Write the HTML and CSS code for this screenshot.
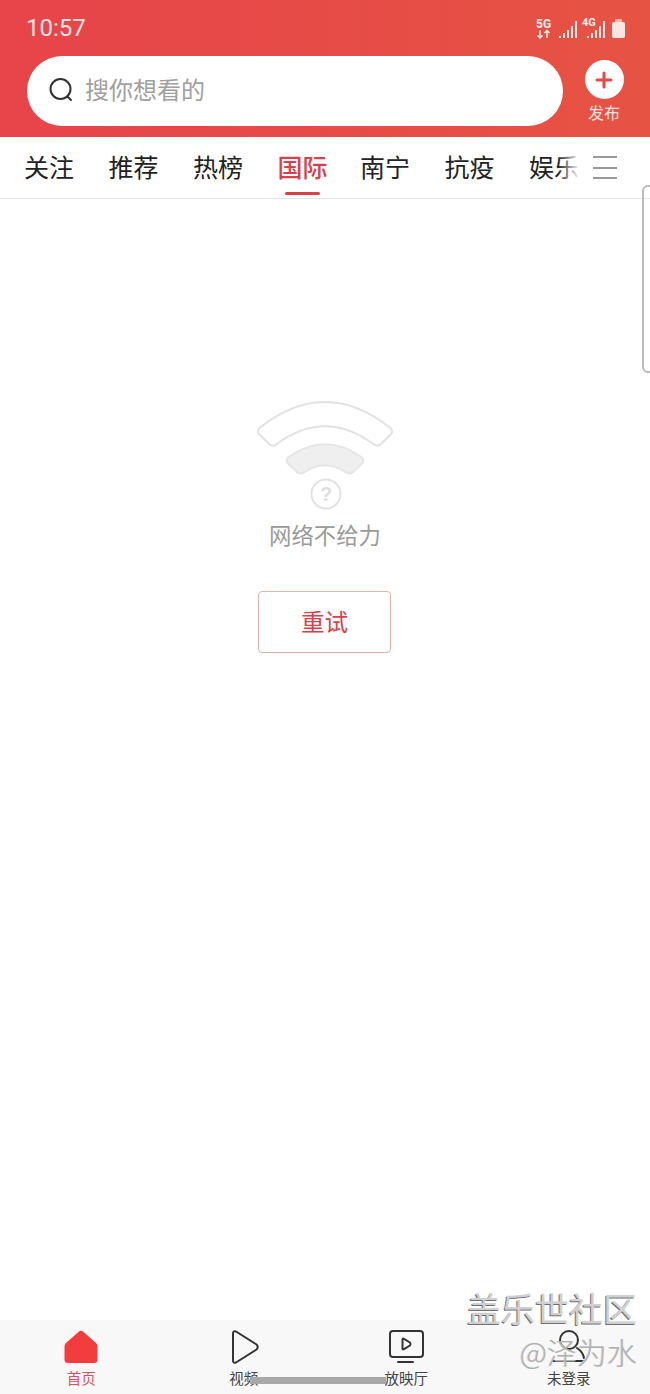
FILE: index.html
```html
<!DOCTYPE html>
<html lang="zh-CN">
<head>
    <meta charset="UTF-8">
    <title>首页</title>
    <link rel="stylesheet" href="styles.css">
</head>
<body>
    <div class="app">
        <header class="header">
            <div class="status-bar">
                <span class="time">10:57</span>
                <svg class="status-icons" width="100" height="24" viewBox="0 0 100 24">
                    <text class="net-label" x="0" y="12">5G</text>
                    <path class="net-arrow" d="M4 14.500v7.500M1.500 19.500l2.500 2.500 2.500-2.500M11 22v-7.500M8.500 17l2.500-2.500 2.500 2.500"/>
                    <path class="bars" d="M24 20v2M28 17v5M32 14v8M36 10v12M40 5v17"/>
                    <text class="net-label small" x="46" y="10">4G</text>
                    <path class="bars" d="M52 20v2M56 17v5M60 14v8M64 10v12M68 5v17"/>
                    <rect class="battery" x="76" y="6" width="13" height="16" rx="2"/>
                    <rect class="battery-cap" x="79" y="3" width="7" height="3" rx="1"/>
                </svg>
            </div>
            <div class="search-row">
                <div class="search-box">
                    <svg class="search-icon" width="26" height="26" viewBox="0 0 26 26">
                        <circle cx="12.500" cy="12" r="10"/>
                        <path d="M19.500 19.500l3.500 3.500"/>
                    </svg>
                    <span class="search-text">搜你想看的</span>
                </div>
                <div class="publish">
                    <div class="publish-btn">
                        <svg width="18" height="18" viewBox="0 0 18 18">
                            <path d="M9 2v14M2 9h14"/>
                        </svg>
                    </div>
                    <span class="publish-text">发布</span>
                </div>
            </div>
        </header>

        <nav class="tabs">
            <div class="tab-list">
                <a class="tab">关注</a>
                <a class="tab">推荐</a>
                <a class="tab">热榜</a>
                <a class="tab active">国际</a>
                <a class="tab">南宁</a>
                <a class="tab">抗疫</a>
                <a class="tab">娱乐</a>
            </div>
            <div class="tab-menu">
                <span></span>
                <span></span>
                <span></span>
            </div>
        </nav>

        <main class="content">
            <svg class="wifi" width="140" height="112" viewBox="0 0 140 112">
                <path class="wifi-outer" d="M3.500 27Q69 -25 134.500 27Q137.500 30 135 33L125 43Q121.500 46 118 43.500Q69 7 20 43.500Q16.500 46 13 43L3 33Q0.500 30 3.500 27Z"/>
                <path class="wifi-inner" d="M32 56.500Q69 30 106 56.500Q108.500 59 106.500 62L97 71Q94 73.500 90 71.500Q69 57 48 71.500Q44 73.500 41 71L31.500 62Q29.500 59 32 56.500Z"/>
                <circle class="wifi-circle" cx="70" cy="93" r="14.500"/>
                <text class="wifi-mark" x="70" y="100">?</text>
            </svg>
            <p class="error-text">网络不给力</p>
            <button class="retry">重试</button>
        </main>

        <footer class="bottom-nav">
            <div class="nav-item active">
                <svg width="36" height="36" viewBox="0 0 36 36">
                    <path class="home-icon" d="M16 2.500Q18 1 20 2.500L33 14Q34.500 15.500 34.500 17.500V30.500Q34.500 34 31 34H5Q1.500 34 1.500 30.500V17.500Q1.500 15.500 3 14Z"/>
                </svg>
                <span>首页</span>
            </div>
            <div class="nav-item">
                <svg width="36" height="36" viewBox="0 0 36 36">
                    <path class="line-icon" d="M7 4.500Q7 1.500 10 2.500L30.500 15.500Q33 18 30.500 20.500L10 33.500Q7 34.500 7 31.500Z"/>
                </svg>
                <span>视频</span>
            </div>
            <div class="nav-item">
                <svg width="36" height="36" viewBox="0 0 36 36">
                    <rect class="line-icon" x="2" y="2" width="33" height="26" rx="3"/>
                    <path class="line-icon" d="M14.500 10.500Q14.500 9 16 9.800L22 13.500Q23.200 15 22 16.500L16 20.200Q14.500 21 14.500 19.500Z"/>
                    <path class="line-icon" d="M10 33h15"/>
                </svg>
                <span>放映厅</span>
            </div>
            <div class="nav-item">
                <svg width="36" height="36" viewBox="0 0 36 36">
                    <circle class="line-icon" cx="18" cy="11" r="9"/>
                    <path class="line-icon" d="M26 19Q32 23 33 29"/>
                    <path class="line-icon" d="M2 32h31"/>
                </svg>
                <span>未登录</span>
            </div>
        </footer>

        <div class="home-bar"></div>
        <div class="side-handle"></div>
        <div class="watermark">
            <div class="wm-title">盖乐世社区</div>
            <div class="wm-author">@泽为水</div>
        </div>
    </div>
</body>
</html>
```

FILE: styles.css
```css
body {
    margin: 0;
    background-color: #ffffff;
    font-family: "Noto Sans CJK SC", "Noto Sans", sans-serif;
    color: #222;
}
.app {
    position: relative;
    width: 650px;
    height: 1394px;
    display: flex;
    flex-direction: column;
    overflow: hidden;
}

/* header */
.header {
    height: 137px;
    box-sizing: border-box;
    background: linear-gradient(90deg, #e7444a, #e65343);
}
.status-bar {
    height: 56px;
    box-sizing: border-box;
    padding: 0 14px 0 26px;
    display: flex;
    justify-content: space-between;
    align-items: flex-start;
}
.time {
    font-family: Roboto, sans-serif;
    font-size: 24px;
    line-height: 56px;
    color: #fbe3e1;
}
.status-icons {
    margin-top: 16px;
    flex-shrink: 0;
}
.net-label {
    font-family: Roboto, sans-serif;
    font-size: 12px;
    font-weight: 700;
    fill: #fdeeee;
}
.net-label.small {
    font-size: 11px;
}
.net-arrow {
    fill: none;
    stroke: #fdeeee;
    stroke-width: 1.500;
}
.bars {
    fill: none;
    stroke: #fbe3e1;
    stroke-width: 2;
}
.battery {
    fill: #fbe6e2;
}
.battery-cap {
    fill: #f3b5ab;
}
.search-row {
    display: flex;
    padding-left: 27px;
}
.search-box {
    width: 536px;
    height: 70px;
    border-radius: 35px;
    background-color: #ffffff;
    display: flex;
    align-items: center;
    box-sizing: border-box;
    padding-left: 21px;
}
.search-icon {
    margin-bottom: 2px;
    fill: none;
    stroke: #333;
    stroke-width: 2;
    stroke-linecap: round;
}
.search-text {
    margin-left: 11px;
    margin-bottom: 6px;
    font-size: 24px;
    color: #a0a0a0;
}
.publish {
    width: 40px;
    margin-left: 21px;
    margin-top: 4px;
    display: flex;
    flex-direction: column;
    align-items: center;
}
.publish-btn {
    width: 39px;
    height: 39px;
    border-radius: 50%;
    background-color: #ffffff;
    display: flex;
    align-items: center;
    justify-content: center;
}
.publish-btn path {
    stroke: #e8474a;
    stroke-width: 3;
    stroke-linecap: round;
    fill: none;
}
.publish-text {
    margin-top: 1px;
    font-size: 16px;
    line-height: 24px;
    color: #fbe3e1;
}

/* tabs */
.tabs {
    position: relative;
    height: 62px;
    box-sizing: border-box;
    border-bottom: 1px solid #e6e6e6;
    display: flex;
}
.tab-list {
    width: 580px;
    padding-left: 24px;
    box-sizing: border-box;
    display: flex;
    gap: 34.500px;
    overflow: hidden;
    position: relative;
}
.tab-list::after {
    content: "";
    position: absolute;
    right: 0;
    top: 0;
    bottom: 0;
    width: 22px;
    background: linear-gradient(90deg, rgba(255, 255, 255, 0), #ffffff);
}
.tab {
    flex-shrink: 0;
    position: relative;
    font-size: 25px;
    line-height: 58px;
    color: #222;
}
.tab.active {
    margin-right: -2px;
    color: #d9404a;
    font-weight: 500;
}
.tab.active::after {
    content: "";
    position: absolute;
    left: 7px;
    right: 8px;
    bottom: 3px;
    height: 3px;
    border-radius: 2px;
    background-color: #d9404a;
}
.tab-menu {
    margin-left: 13px;
    width: 24px;
    height: 23px;
    margin-top: 19px;
    display: flex;
    flex-direction: column;
    justify-content: space-between;
}
.tab-menu span {
    height: 2px;
    background-color: #999;
}

/* empty state */
.content {
    flex: 1;
    display: flex;
    flex-direction: column;
    align-items: center;
    padding-top: 202px;
}
.wifi {
    display: block;
    margin-left: 1px;
}
.wifi-outer {
    fill: #ffffff;
    stroke: #e2e2e2;
    stroke-width: 2;
}
.wifi-inner {
    fill: #efefef;
    stroke: #e6e6e6;
    stroke-width: 2;
}
.wifi-circle {
    fill: none;
    stroke: #e2e2e2;
    stroke-width: 2;
}
.wifi-mark {
    font-family: "Liberation Sans", sans-serif;
    font-size: 20px;
    font-weight: 700;
    text-anchor: middle;
    fill: #dedede;
}
.error-text {
    margin: 7px 0 0;
    font-size: 22.400px;
    line-height: 28px;
    color: #9a9a9a;
}
.retry {
    margin-top: 43px;
    margin-left: -1px;
    width: 133px;
    height: 62px;
    box-sizing: border-box;
    border: 1px solid #e3b4ab;
    border-radius: 4px;
    background-color: #ffffff;
    font-family: inherit;
    font-size: 23.500px;
    color: #d9404a;
    padding: 0 0 2px;
}

/* bottom nav */
.bottom-nav {
    height: 74px;
    background-color: #f8f8f8;
    display: grid;
    grid-template-columns: repeat(4, 1fr);
}
.nav-item {
    display: flex;
    flex-direction: column;
    align-items: center;
    padding-top: 9px;
    font-size: 14.500px;
    color: #444;
}
.nav-item span {
    line-height: 20px;
    margin-top: 3px;
}
.nav-item.active span {
    color: #d9505a;
}
.home-icon {
    fill: #f23c3e;
}
.line-icon {
    fill: none;
    stroke: #333;
    stroke-width: 2;
    stroke-linejoin: round;
    stroke-linecap: round;
}

/* overlays */
.home-bar {
    position: absolute;
    left: 250px;
    bottom: 10px;
    width: 136px;
    height: 7px;
    background-color: #a8a8a8;
}
.side-handle {
    position: absolute;
    right: -8px;
    top: 185px;
    width: 12px;
    height: 184px;
    border: 2px solid #bbbbbb;
    border-radius: 6px;
}
.watermark {
    position: absolute;
    right: 13px;
    top: 1286px;
    text-align: right;
}
.wm-title {
    font-size: 34px;
    line-height: 44px;
    color: #d0d0d0;
    text-shadow: -1px 1px 0 #6f6f6f;
}
.wm-author {
    margin-top: 1px;
    font-size: 30px;
    line-height: 40px;
    font-weight: 300;
    color: #b0b0b0;
    text-shadow: -1px 0 0 #d8d8d8;
}
```
